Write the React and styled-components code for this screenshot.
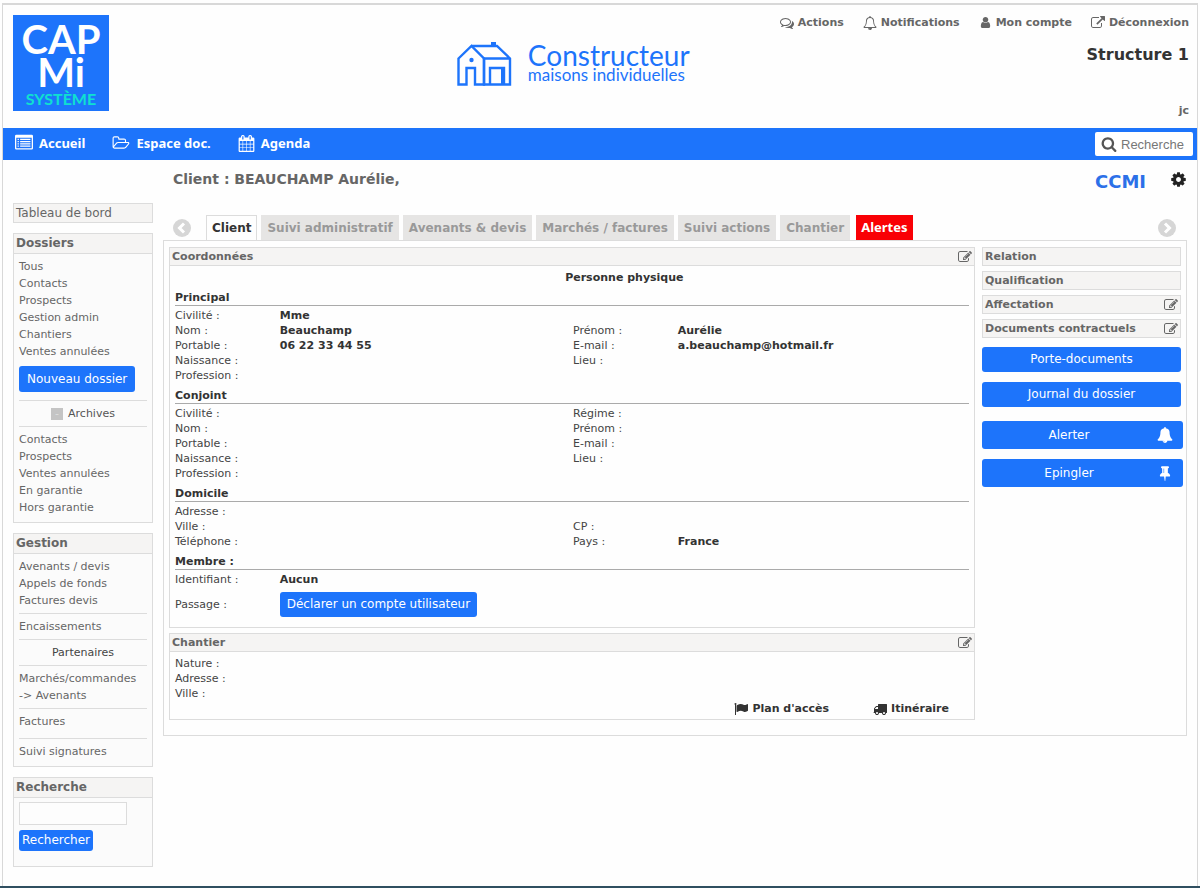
import React from 'react'
import styled, { createGlobalStyle, css } from 'styled-components';

const blue = '#1d74fb';

const GlobalStyle = createGlobalStyle`
    * {
        box-sizing: border-box;
    }
    body {
        margin: 0;
        background-color: #fefefe;
        color: #333;
        font-family: "DejaVu Sans", Verdana, sans-serif;
        font-size: 11px;
        line-height: 15px;
    }
    a {
        color: inherit;
        text-decoration: none;
    }
    button, input {
        font-family: inherit;
    }
`;

const Page = styled.div`
    display: flex;
    flex-direction: column;
    min-height: 100vh;
    padding: 3px 2px 0;
    border-bottom: 2px solid #2f4f60;
`;

const Frame = styled.div`
    flex: 1;
    border: 1px solid #d8d8d8;
    border-top-width: 2px;
    border-bottom: 0;
`;

/* ---------- icons ---------- */

const Svg = styled.svg`
    display: block;
    flex: none;
    fill: currentColor;
`;

const paths = {
  comments: 'M704 384q-153 0-286 52t-211.5 141-78.5 191q0 82 53 158t149 132l97 56-35 84q34-20 62-39l44-31 53 10q78 14 153 14 153 0 286-52t211.5-141 78.5-191-78.5-191-211.5-141-286-52zm0-128q191 0 353.5 68.5t256.5 186.5 94 257-94 257-256.5 186.5-353.5 68.5q-86 0-176-16-124 88-278 128-36 9-86 16h-3q-11 0-20.5-8t-11.5-21q-1-3-1-6.5t.5-6.5 2-6l2.5-5 3.5-5.5 4-5 4.5-5 4-4.5q5-6 23-25t26-29.5 22.5-29 25-38.5 20.5-44q-124-72-195-177t-71-224q0-139 94-257t256.5-186.5 353.5-68.5zm822 1169q10 24 20.5 44t25 38.5 22.5 29 26 29.5 23 25q1 1 4 4.5t4.5 5 4 5 3.5 5.5l2.5 5 2 6 .5 6.5-1 6.5q-3 14-13 22t-22 7q-50-7-86-16-154-40-278-128-90 16-176 16-271 0-472-132 58 4 88 4 161 0 309-45t264-129q125-92 192-212t67-254q0-77-23-152 129 71 204 178t75 230q0 120-71 224.5t-195 176.5z',
  bellOutline: 'M912 1696q0-16-16-16-59 0-101.5-42.5t-42.5-101.5q0-16-16-16t-16 16q0 73 51.5 124.5t124.5 51.5q16 0 16-16zm-666-288h1300q-266-300-266-832 0-51-24-105t-69-103-121.5-80.5-169.5-31.5-169.5 31.5-121.5 80.5-69 103-24 105q0 532-266 832zm1482 0q0 52-38 90t-90 38h-448q0 106-75 181t-181 75-181-75-75-181h-448q-52 0-90-38t-38-90q50-42 91-88t85-119.5 74.5-158.5 50-206 19.5-260q0-152 117-282.5t307-158.5q-8-19-8-39 0-40 28-68t68-28 68 28 28 68q0 20-8 39 190 28 307 158.5t117 282.5q0 139 19.5 260t50 206 74.5 158.5 85 119.5 91 88z',
  bell: 'M912 1696q0-16-16-16-59 0-101.5-42.5t-42.5-101.5q0-16-16-16t-16 16q0 73 51.5 124.5t124.5 51.5q16 0 16-16zm816-288q0 52-38 90t-90 38h-448q0 106-75 181t-181 75-181-75-75-181h-448q-52 0-90-38t-38-90q50-42 91-88t85-119.5 74.5-158.5 50-206 19.5-260q0-152 117-282.5t307-158.5q-8-19-8-39 0-40 28-68t68-28 68 28 28 68q0 20-8 39 190 28 307 158.5t117 282.5q0 139 19.5 260t50 206 74.5 158.5 85 119.5 91 88z',
  user: 'M1536 1399q0 109-62.5 187t-150.5 78h-854q-88 0-150.5-78t-62.5-187q0-85 8.5-160.5t31.5-152 58.5-131 94-89 134.5-34.5q131 128 313 128t313-128q76 0 134.5 34.5t94 89 58.5 131 31.5 152 8.5 160.5zm-256-887q0 159-112.5 271.5t-271.5 112.5-271.5-112.5-112.5-271.5 112.5-271.5 271.5-112.5 271.5 112.5 112.5 271.5z',
  external: 'M1408 928v320q0 119-84.5 203.5t-203.5 84.5h-832q-119 0-203.5-84.5t-84.5-203.5v-832q0-119 84.5-203.5t203.5-84.5h704q14 0 23 9t9 23v64q0 14-9 23t-23 9h-704q-66 0-113 47t-47 113v832q0 66 47 113t113 47h832q66 0 113-47t47-113v-320q0-14 9-23t23-9h64q14 0 23 9t9 23zm384-864v512q0 26-19 45t-45 19-45-19l-176-176-652 652q-10 10-23 10t-23-10l-114-114q-10-10-10-23t10-23l652-652-176-176q-19-19-19-45t19-45 45-19h512q26 0 45 19t19 45z',
  list: 'M128 64h1536q128 0 128 128v1216q0 128-128 128h-1536q-128 0-128-128v-1216q0-128 128-128zm0 320v1024h1536v-1024zm128 96h128v128h-128zm256 0h1024v128h-1024zm-256 224h128v128h-128zm256 0h1024v128h-1024zm-256 224h128v128h-128zm256 0h1024v128h-1024zm-256 224h128v128h-128zm256 0h1024v128h-1024z',
  folder: 'M1845 931q0-35-53-35h-1088q-40 0-85.5 21.5t-71.5 52.5l-294 363q-18 24-18 40 0 35 53 35h1088q40 0 86-22t71-53l294-363q18-22 18-39zm-1141-163h768v-160q0-40-28-68t-68-28h-576q-40 0-68-28t-28-68v-64q0-40-28-68t-68-28h-320q-40 0-68 28t-28 68v853l256-315q44-53 116-87.5t140-34.5zm1269 163q0 62-46 120l-295 363q-43 53-116 87.5t-140 34.5h-1088q-92 0-158-66t-66-158v-960q0-92 66-158t158-66h320q92 0 158 66t66 158v32h544q92 0 158 66t66 158v160h192q54 0 99 24.5t67 70.5q15 32 15 68z',
  calendar: 'M192 1664h288v-288h-288v288zm352 0h320v-288h-320v288zm-352-352h288v-320h-288v320zm352 0h320v-320h-320v320zm-352-384h288v-288h-288v288zm736 736h320v-288h-320v288zm-384-736h320v-288h-320v288zm768 736h288v-288h-288v288zm-384-352h320v-320h-320v320zm-352-864v-288q0-13-9.5-22.5t-22.5-9.5h-64q-13 0-22.5 9.5t-9.5 22.5v288q0 13 9.5 22.5t22.5 9.5h64q13 0 22.5-9.5t9.5-22.5zm736 864h288v-320h-288v320zm-384-384h320v-288h-320v288zm384 0h288v-288h-288v288zm32-480v-288q0-13-9.5-22.5t-22.5-9.5h-64q-13 0-22.5 9.5t-9.5 22.5v288q0 13 9.5 22.5t22.5 9.5h64q13 0 22.5-9.5t9.5-22.5zm384-64v1280q0 52-38 90t-90 38h-1408q-52 0-90-38t-38-90v-1280q0-52 38-90t90-38h128v-96q0-66 47-113t113-47h64q66 0 113 47t47 113v96h384v-96q0-66 47-113t113-47h64q66 0 113 47t47 113v96h128q52 0 90 38t38 90z',
  search: 'M1216 832q0-185-131.5-316.5t-316.5-131.5-316.5 131.5-131.5 316.5 131.5 316.5 316.5 131.5 316.5-131.5 131.5-316.5zm512 832q0 52-38 90t-90 38q-54 0-90-38l-343-342q-179 124-399 124-143 0-273.5-55.5t-225-150-150-225-55.5-273.5 55.5-273.5 150-225 225-150 273.5-55.5 273.5 55.5 225 150 150 225 55.5 273.5q0 220-124 399l343 343q37 37 37 90z',
  cog: 'M1152 896q0-106-75-181t-181-75-181 75-75 181 75 181 181 75 181-75 75-181zm512-109v222q0 12-8 23t-20 13l-185 28q-19 54-39 91 35 50 107 138 10 12 10 25t-9 23q-27 37-99 108t-94 71q-12 0-26-9l-138-108q-44 23-91 38-16 136-29 186-7 28-36 28h-222q-14 0-24.5-8.5t-11.5-21.5l-28-184q-49-16-90-37l-141 107q-10 9-25 9-14 0-25-11-126-114-165-168-7-10-7-23 0-12 8-23 15-21 51-66.5t54-70.5q-27-50-41-99l-183-27q-13-2-21-12.5t-8-23.5v-222q0-12 8-23t19-13l186-28q14-46 39-92-40-57-107-138-10-12-10-24 0-10 9-23 26-36 98.5-107.5t94.5-71.5q13 0 26 10l138 107q44-23 91-38 16-136 29-186 7-28 36-28h222q14 0 24.5 8.5t11.5 21.5l28 184q49 16 90 37l142-107q9-9 24-9 13 0 25 10 129 119 165 170 7 8 7 22 0 12-8 23-15 21-51 66.5t-54 70.5q26 50 41 98l183 28q13 2 21 12.5t8 23.5z',
  edit: 'M888 1184l116-116-152-152-116 116v56h96v96h56zm440-720q-16-16-33 1l-350 350q-17 17-1 33t33-1l350-350q17-17 1-33zm80 594v190q0 119-84.5 203.5t-203.5 84.5h-832q-119 0-203.5-84.5t-84.5-203.5v-832q0-119 84.5-203.5t203.5-84.5h832q63 0 117 25 15 7 18 23 3 17-9 29l-49 49q-14 14-32 8-23-6-45-6h-832q-66 0-113 47t-47 113v832q0 66 47 113t113 47h832q66 0 113-47t47-113v-126q0-13 9-22l64-64q15-15 35-7t20 29zm-96-738l288 288-672 672h-288v-288zm444 132l-92 92-288-288 92-92q28-28 68-28t68 28l152 152q28 28 28 68t-28 68z',
  flag: 'M320 256q0 72-64 110v1266q0 13-9.5 22.5t-22.5 9.5h-64q-13 0-22.5-9.5t-9.5-22.5v-1266q-64-38-64-110 0-53 37.5-90.5t90.5-37.5 90.5 37.5 37.5 90.5zm1472 64v763q0 25-12.5 38.5t-39.5 27.5q-215 116-369 116-61 0-123.5-22t-108.5-48-115.5-48-142.5-22q-192 0-464 146-17 9-33 9-26 0-45-19t-19-45v-742q0-32 31-55 21-14 79-43 236-120 421-120 107 0 200 29t219 88q38 19 88 19 54 0 117.5-21t110-47 88-47 54.5-21q26 0 45 19t19 45z',
  truck: 'M640 1408q0-52-38-90t-90-38-90 38-38 90 38 90 90 38 90-38 38-90zm-384-512h384v-256h-158q-13 0-22 9l-195 195q-9 9-9 22v30zm1280 512q0-52-38-90t-90-38-90 38-38 90 38 90 90 38 90-38 38-90zm256-1088v1024q0 15-4 26.5t-13.5 18.5-16.5 11.5-23.5 6-22.5 2-25.5 0-22.5-.5q0 106-75 181t-181 75-181-75-75-181h-384q0 106-75 181t-181 75-181-75-75-181h-64q-3 0-22.5.5t-25.5 0-22.5-2-23.5-6-16.5-11.5-13.5-18.5-4-26.5q0-26 19-45t45-19v-320q0-8-.5-35t0-38 2.5-34.5 6.5-37 14-30.5 22.5-30l198-198q19-19 50.5-32t58.5-13h160v-192q0-26 19-45t45-19h1024q26 0 45 19t19 45z',
  pin: 'M800 864v-448q0-14-9-23t-23-9-23 9-9 23v448q0 14 9 23t23 9 23-9 9-23zm672 352q0 26-19 45t-45 19h-429l-51 483q-2 12-10.5 20.5t-20.5 8.5h-1q-27 0-32-27l-76-485h-404q-26 0-45-19t-19-45q0-123 78.5-221.5t177.5-98.5v-512q-52 0-90-38t-38-90 38-90 90-38h640q52 0 90 38t38 90-38 90-90 38v512q99 0 177.5 98.5t78.5 221.5z',
};

const Icon = ({ name, size = 14, wide }) => (
  <Svg
    width={wide ? Math.round(size * 8 / 7) : size}
    height={size}
    viewBox={wide ? '0 0 2048 1792' : '0 0 1792 1792'}
    fillRule={name === 'list' ? 'evenodd' : 'nonzero'}
    aria-hidden="true"
  >
    <path d={paths[name]} />
  </Svg>
)

const Chevron = ({ flip }) => (
  <Svg width="18" height="18" viewBox="0 0 18 18" aria-hidden="true">
    <circle cx="9" cy="9" r="9" fill="#d6d6d6" />
    <path d={flip ? 'M7 4.5l4.5 4.5L7 13.5' : 'M11 4.5L6.5 9l4.5 4.5'} fill="none" stroke="#fff" strokeWidth="3" />
  </Svg>
)

const House = () => (
  <Svg width="56" height="44" viewBox="0 0 56 44" aria-hidden="true">
    <g fill="none" stroke={blue} strokeWidth="2.4">
      <path d="M1.5 16.5L14.5 4 27 16.5v26H18V26H9.5v16.5H1.5z" />
      <path d="M14.5 4H40L53 16.5v26H27v-26h26" />
      <path d="M33 42V26H47V42" />
      <path d="M46 26V42" strokeWidth="4" />
    </g>
    <path d="M34 0h5v5h-5z" fill={blue} />
    <circle cx="14.5" cy="18" r="2.2" fill={blue} />
  </Svg>
)

/* ---------- header ---------- */

const Header = styled.header`
    display: grid;
    grid-template-columns: 8fr auto 9fr;
    height: 123px;
    padding: 10px 8px 0 10px;
`;

const Logo = styled.a`
    display: flex;
    flex-direction: column;
    align-items: center;
    width: 96px;
    height: 96px;
    padding-top: 8px;
    background-color: ${blue};
    color: #fff;
    font-family: Lato, sans-serif;
    font-weight: bold;
`;

const LogoLine = styled.span`
    font-size: 40px;
    line-height: 33px;
`;

const LogoSub = styled.span`
    color: #0fe0d0;
    font-size: 16px;
    line-height: 20px;
`;

const Brand = styled.div`
    display: flex;
    align-items: flex-start;
    gap: 15px;
    padding-top: 27px;
    color: ${blue};
    font-family: Lato, sans-serif;
`;

const BrandName = styled.div`
    font-size: 28px;
    line-height: 26px;
`;

const BrandSub = styled.div`
    font-size: 17px;
    line-height: 14px;
`;

const Account = styled.div`
    display: flex;
    flex-direction: column;
    align-items: flex-end;
    color: #666;
    font-weight: bold;
`;

const AccountLinks = styled.nav`
    display: flex;
    gap: 19px;
    a {
        display: flex;
        align-items: center;
        gap: 4px;
    }
`;

const Structure = styled.div`
    margin-top: 15px;
    color: #333;
    font-size: 16px;
    line-height: 20px;
`;

const UserCode = styled.div`
    margin-top: 38px;
`;

const NavBar = styled.nav`
    display: flex;
    align-items: center;
    gap: 27px;
    height: 32px;
    padding: 0 4px 0 12px;
    background-color: ${blue};
    color: #fff;
    font-family: "Noto Sans", sans-serif;
    font-size: 13px;
    font-weight: bold;
`;

const NavLink = styled.a`
    display: flex;
    align-items: center;
    gap: 6px;
    padding-bottom: 2px;
`;

const SearchBox = styled.label`
    display: flex;
    align-items: center;
    gap: 4px;
    width: 98px;
    height: 24px;
    margin-left: auto;
    padding: 0 6px;
    border-radius: 2px;
    background-color: #fff;
    color: #555;
    input {
        width: 100%;
        min-width: 0;
        padding: 0;
        border: 0;
        outline: 0;
        font: 13px "Liberation Sans", Arial, sans-serif;
    }
    input::placeholder {
        color: #777;
    }
`;

/* ---------- sidebar ---------- */

const Body = styled.div`
    display: flex;
    align-items: flex-start;
    gap: 10px;
    padding: 0 10px 19px;
`;

const Sidebar = styled.aside`
    display: flex;
    flex: none;
    flex-direction: column;
    gap: 10px;
    width: 140px;
    padding-top: 43px;
    color: #666;
`;

const Box = styled.section`
    border: 1px solid #dcdcdc;
    background-color: #fbfbfb;
`;

const BoxTitle = styled.h2`
    margin: 0;
    padding: 0 2px;
    border-bottom: ${({ $alone }) => ($alone ? 0 : '1px solid #dcdcdc')};
    background-color: #f5f4f3;
    font-size: 12px;
    font-weight: ${({ $alone }) => ($alone ? 'normal' : 'bold')};
    line-height: ${({ $alone }) => ($alone ? '18px' : '19px')};
`;

const BoxBody = styled.div`
    padding: 4px 5px ${({ $bottom }) => $bottom || 6}px;
    line-height: 17px;
    > a {
        display: block;
    }
`;

const Rule = styled.hr`
    height: 1px;
    margin: ${({ $spaced }) => ($spaced ? '8px' : '4px')} 0 4px;
    border: 0;
    background-color: #dcdcdc;
`;

const Centered = styled.div`
    display: flex;
    align-items: center;
    justify-content: center;
    gap: 5px;
    color: ${({ $dark }) => ($dark ? '#444' : '#555')};
`;

const ArchiveMark = styled.span`
    width: 12px;
    height: 12px;
    background-color: #c4c4c4;
    color: #dedede;
    font-size: 11px;
    line-height: 12px;
    text-align: center;
`;

const Button = styled.button`
    display: block;
    height: 25px;
    padding: 0 7px;
    border: 0;
    border-radius: 3px;
    background-color: ${blue};
    color: #fff;
    font-size: 12px;
    line-height: 15px;
    cursor: pointer;
`;

const NewButton = styled(Button)`
    height: 26px;
    margin: 6px 0 8px;
    padding: 0 8px;
`;

const SmallButton = styled(Button)`
    height: 21px;
    margin-top: 5px;
    padding: 0 3px;
`;

const SideInput = styled.input`
    display: block;
    width: 108px;
    height: 23px;
    border: 1px solid #dcdcdc;
    background-color: #fdfdfd;
`;

/* ---------- main ---------- */

const Main = styled.main`
    flex: 1;
    min-width: 0;
`;

const TitleRow = styled.div`
    display: flex;
    align-items: center;
    height: 38px;
    padding-left: 10px;
    color: #222;
`;

const Title = styled.h1`
    margin: 0;
    color: #666;
    font-size: 14px;
    line-height: 20px;
`;

const FileKind = styled.span`
    margin: 5px 24px 0 auto;
    color: #2c70e8;
    font-size: 18px;
    font-weight: bold;
    line-height: 20px;
`;

const IconButton = styled.button`
    display: block;
    padding: 0;
    border: 0;
    background: none;
    color: inherit;
    cursor: pointer;
`;

const TabRow = styled.div`
    display: flex;
    align-items: center;
    justify-content: space-between;
    height: 42px;
    padding: 17px 11px 0 10px;
    > div {
        flex: 1;
        margin-left: 15px;
    }
`;

const Tabs = styled.div`
    display: flex;
    align-items: flex-end;
    gap: 4px;
`;

const Tab = styled.button`
    height: 25px;
    padding: 1px 6px 0;
    border: 0;
    background-color: #e6e5e4;
    color: #999;
    font-size: 12px;
    font-weight: bold;
    white-space: nowrap;
    ${({ $active }) => $active && css`
        padding: 0 5px;
        border: 1px solid #dcdcdc;
        border-bottom: 0;
        background-color: #fefefe;
        color: #333;
    `}
    ${({ $alert }) => $alert && css`
        margin-left: 2px;
        padding: 0 5px 2px;
        background-color: #f90005;
        color: #fff;
        font-family: "Noto Sans", sans-serif;
        font-size: 13px;
    `}
`;

const Sheet = styled.div`
    display: flex;
    align-items: flex-start;
    gap: 7px;
    padding: 6px 5px 15px;
    border: 1px solid #dcdcdc;
`;

const Details = styled.div`
    display: flex;
    flex: 1;
    flex-direction: column;
    gap: 5px;
    min-width: 0;
`;

const Panel = styled.section`
    border: 1px solid #dcdcdc;
`;

const PanelTitle = styled.h3`
    display: flex;
    align-items: center;
    justify-content: space-between;
    margin: 0;
    padding: 0 2px;
    border-bottom: ${({ $alone }) => ($alone ? 0 : '1px solid #dcdcdc')};
    background-color: #f5f4f3;
    color: #666;
    font-size: 11px;
    line-height: 17px;
`;

const PanelBody = styled.div`
    padding: 4px 5px ${({ $bottom }) => $bottom}px;
`;

const Fields = styled.dl`
    display: grid;
    grid-template-columns: 105fr 294fr 105fr 292fr;
    margin: 0;
    dt {
        color: #444;
    }
    dt, dd {
        min-height: 15px;
        margin: 0;
    }
    dd {
        font-weight: bold;
    }
`;

const PersonType = styled(Fields).attrs({ as: 'div' })`
    strong {
        grid-column: 2 / -1;
        text-align: center;
    }
`;

const GroupTitle = styled.h4`
    margin: 0 0 2px;
    padding-top: 5px;
    border-bottom: 1px solid #aaa;
    font-size: 11px;
    line-height: 15px;
`;

const Access = styled(Fields)`
    align-items: center;
    padding-top: 5px;
`;

const PlaceLinks = styled.div`
    display: flex;
    justify-content: flex-end;
    gap: 44px;
    padding-right: 20px;
    font-weight: bold;
    a {
        display: flex;
        align-items: center;
        gap: 4px;
    }
`;

const Tools = styled.div`
    display: flex;
    flex: none;
    flex-direction: column;
    gap: 5px;
    width: 199px;
`;

const ToolButtons = styled.div`
    display: flex;
    flex-direction: column;
    gap: 10px;
    margin-top: 4px;
`;

const WideButtons = styled(ToolButtons)`
    width: 201px;
    margin-top: 9px;
`;

const IconTextButton = styled(Button)`
    display: flex;
    align-items: center;
    height: 28px;
    padding: 0 10px;
    span {
        flex: 1;
        text-align: center;
        padding-right: 11px;
    }
`;

const dossierLinks = ['Tous', 'Contacts', 'Prospects', 'Gestion admin', 'Chantiers', 'Ventes annulées'];
const archiveLinks = ['Contacts', 'Prospects', 'Ventes annulées', 'En garantie', 'Hors garantie'];
const tabs = ['Client', 'Suivi administratif', 'Avenants & devis', 'Marchés / factures', 'Suivi actions', 'Chantier', 'Alertes'];

// each row: label, value, second label, second value
const groups = [
  {
    title: 'Principal',
    rows: [
      ['Civilité :', 'Mme'],
      ['Nom :', 'Beauchamp', 'Prénom :', 'Aurélie'],
      ['Portable :', '06 22 33 44 55', 'E-mail :', 'a.beauchamp@hotmail.fr'],
      ['Naissance :', '', 'Lieu :'],
      ['Profession :'],
    ],
  },
  {
    title: 'Conjoint',
    rows: [
      ['Civilité :', '', 'Régime :'],
      ['Nom :', '', 'Prénom :'],
      ['Portable :', '', 'E-mail :'],
      ['Naissance :', '', 'Lieu :'],
      ['Profession :'],
    ],
  },
  {
    title: 'Domicile',
    rows: [
      ['Adresse :'],
      ['Ville :', '', 'CP :'],
      ['Téléphone :', '', 'Pays :', 'France'],
    ],
  },
  { title: 'Membre :', rows: [['Identifiant :', 'Aucun']] },
];

const FieldRows = ({ rows }) => (
  <Fields>
    {rows.map(([label, value, label2, value2]) => (
      <React.Fragment key={label}>
        <dt>{label}</dt>
        <dd>{value}</dd>
        <dt>{label2}</dt>
        <dd>{value2}</dd>
      </React.Fragment>
    ))}
  </Fields>
)

const Links = ({ items }) => items.map((item) => <a href="#" key={item}>{item}</a>)

const EditButton = ({ label }) => (
  <IconButton aria-label={`Modifier ${label}`}><Icon name="edit" size={14} /></IconButton>
)

const TopHeader = () => (
  <Header>
    <Logo href="#">
      <LogoLine>CAP</LogoLine>
      <LogoLine>Mi</LogoLine>
      <LogoSub>SYSTÈME</LogoSub>
    </Logo>
    <Brand>
      <House />
      <div>
        <BrandName>Constructeur</BrandName>
        <BrandSub>maisons individuelles</BrandSub>
      </div>
    </Brand>
    <Account>
      <AccountLinks>
        <a href="#"><Icon name="comments" />Actions</a>
        <a href="#"><Icon name="bellOutline" />Notifications</a>
        <a href="#"><Icon name="user" size={13} />Mon compte</a>
        <a href="#"><Icon name="external" />Déconnexion</a>
      </AccountLinks>
      <Structure>Structure 1</Structure>
      <UserCode>jc</UserCode>
    </Account>
  </Header>
)

const SideMenu = () => (
  <Sidebar>
    <Box>
      <BoxTitle $alone><a href="#">Tableau de bord</a></BoxTitle>
    </Box>
    <Box>
      <BoxTitle>Dossiers</BoxTitle>
      <BoxBody>
        <Links items={dossierLinks} />
        <NewButton>Nouveau dossier</NewButton>
        <Rule />
        <Centered><ArchiveMark>-</ArchiveMark>Archives</Centered>
        <Rule />
        <Links items={archiveLinks} />
      </BoxBody>
    </Box>
    <Box>
      <BoxTitle>Gestion</BoxTitle>
      <BoxBody>
        <Links items={['Avenants / devis', 'Appels de fonds', 'Factures devis']} />
        <Rule />
        <Links items={['Encaissements']} />
        <Rule />
        <Centered $dark>Partenaires</Centered>
        <Rule />
        <Links items={['Marchés/commandes', '-> Avenants']} />
        <Rule />
        <Links items={['Factures']} />
        <Rule $spaced />
        <Links items={['Suivi signatures']} />
      </BoxBody>
    </Box>
    <Box>
      <BoxTitle>Recherche</BoxTitle>
      <BoxBody $bottom={15}>
        <SideInput aria-label="Recherche" />
        <SmallButton>Rechercher</SmallButton>
      </BoxBody>
    </Box>
  </Sidebar>
)

const App = () => {
  return (
    <Page>
      <GlobalStyle />
      <Frame>
        <TopHeader />
        <NavBar>
          <NavLink href="#"><Icon name="list" size={18} />Accueil</NavLink>
          <NavLink href="#"><Icon name="folder" size={16} wide />Espace doc.</NavLink>
          <NavLink href="#"><Icon name="calendar" size={17} />Agenda</NavLink>
          <SearchBox>
            <Icon name="search" size={16} />
            <input placeholder="Recherche" aria-label="Recherche" />
          </SearchBox>
        </NavBar>
        <Body>
          <SideMenu />
          <Main>
            <TitleRow>
              <Title>Client : BEAUCHAMP Aurélie,</Title>
              <FileKind>CCMI</FileKind>
              <IconButton aria-label="Paramètres"><Icon name="cog" size={17} /></IconButton>
            </TitleRow>
            <TabRow>
              <IconButton aria-label="Précédent"><Chevron /></IconButton>
              <Tabs role="tablist">
                {tabs.map((tab) => (
                  <Tab key={tab} role="tab" $active={tab === 'Client'} $alert={tab === 'Alertes'}>{tab}</Tab>
                ))}
              </Tabs>
              <IconButton aria-label="Suivant"><Chevron flip /></IconButton>
            </TabRow>
            <Sheet>
              <Details>
                <Panel>
                  <PanelTitle>Coordonnées<EditButton label="Coordonnées" /></PanelTitle>
                  <PanelBody $bottom={10}>
                    <PersonType><strong>Personne physique</strong></PersonType>
                    {groups.map((group) => (
                      <div key={group.title}>
                        <GroupTitle>{group.title}</GroupTitle>
                        <FieldRows rows={group.rows} />
                      </div>
                    ))}
                    <Access>
                      <dt>Passage :</dt>
                      <dd><Button>Déclarer un compte utilisateur</Button></dd>
                    </Access>
                  </PanelBody>
                </Panel>
                <Panel>
                  <PanelTitle>Chantier<EditButton label="Chantier" /></PanelTitle>
                  <PanelBody $bottom={3}>
                    <FieldRows rows={[['Nature :'], ['Adresse :'], ['Ville :']]} />
                    <PlaceLinks>
                      <a href="#"><Icon name="flag" />Plan d'accès</a>
                      <a href="#"><Icon name="truck" />Itinéraire</a>
                    </PlaceLinks>
                  </PanelBody>
                </Panel>
              </Details>
              <Tools>
                <Panel><PanelTitle $alone>Relation</PanelTitle></Panel>
                <Panel><PanelTitle $alone>Qualification</PanelTitle></Panel>
                <Panel><PanelTitle $alone>Affectation<EditButton label="Affectation" /></PanelTitle></Panel>
                <Panel><PanelTitle $alone>Documents contractuels<EditButton label="Documents contractuels" /></PanelTitle></Panel>
                <ToolButtons>
                  <Button>Porte-documents</Button>
                  <Button>Journal du dossier</Button>
                </ToolButtons>
                <WideButtons>
                  <IconTextButton><span>Alerter</span><Icon name="bell" size={16} /></IconTextButton>
                  <IconTextButton><span>Epingler</span><Icon name="pin" size={16} /></IconTextButton>
                </WideButtons>
              </Tools>
            </Sheet>
          </Main>
        </Body>
      </Frame>
    </Page>
  )
}

export default App;
